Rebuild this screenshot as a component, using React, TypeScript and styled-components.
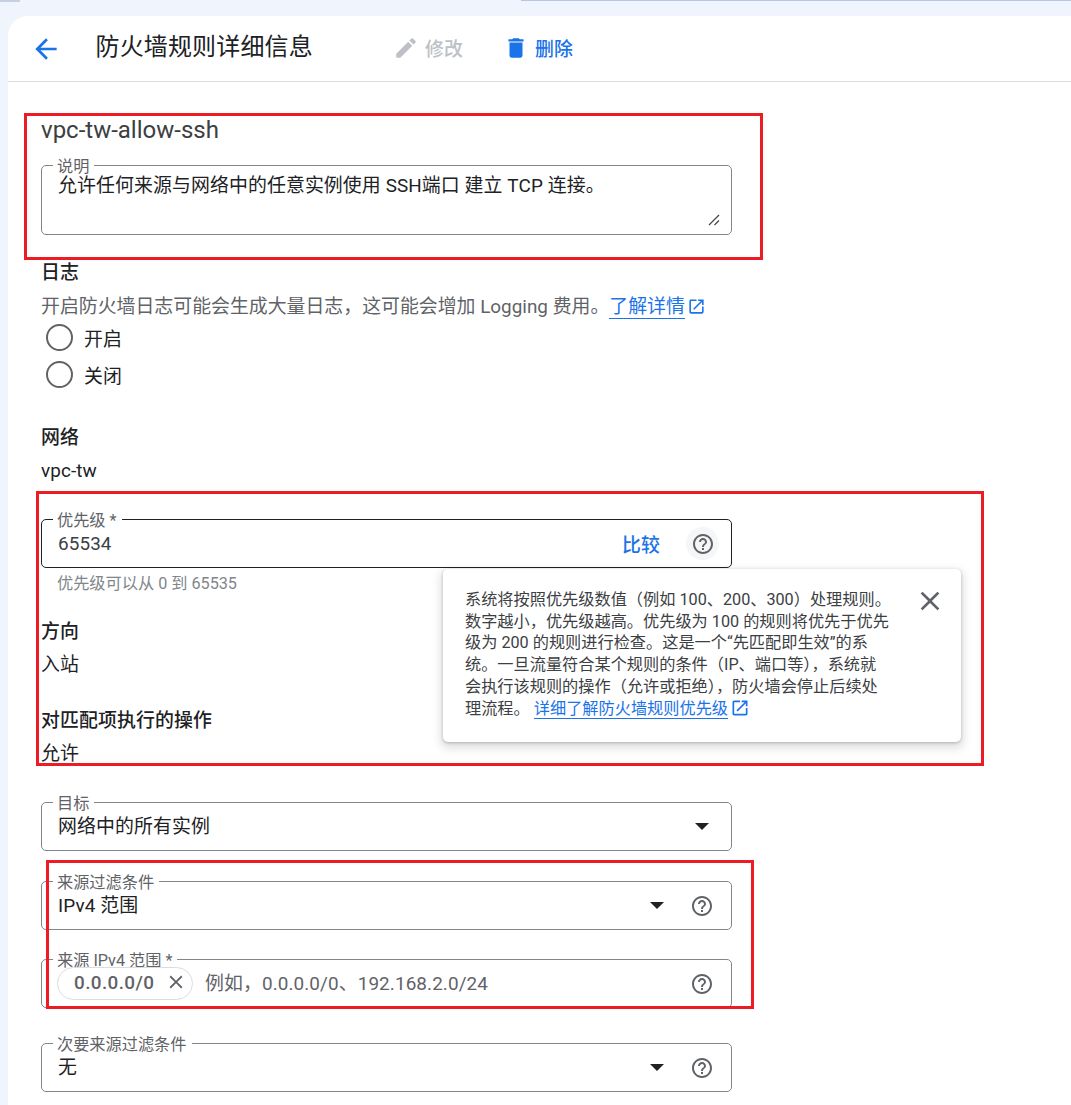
import { ReactNode } from 'react';
import { createGlobalStyle, styled } from 'styled-components';

const CJK = `Roboto, "Noto Sans CJK SC", sans-serif`;

const Global = createGlobalStyle`
  html, body {
    margin: 0;
    height: 1105px;
    overflow: hidden;
    background: #f0f4fc;
  }
  * { box-sizing: border-box; }
`;

const HelpIcon = () => (
  <svg width="24" height="24" viewBox="0 0 24 24" fill="#5f6368">
    <path d="M11 18h2v-2h-2v2zm1-16C6.48 2 2 6.48 2 12s4.48 10 10 10 10-4.480 10-10S17.520 2 12 2zm0 18c-4.410 0-8-3.590-8-8s3.590-8 8-8 8 3.590 8 8-3.590 8-8 8zm0-14c-2.210 0-4 1.790-4 4h2c0-1.100.9-2 2-2s2 .9 2 2c0 2-3 1.750-3 5h2c0-2.250 3-2.500 3-5 0-2.210-1.790-4-4-4z" />
  </svg>
);

const ExternalIcon = ({ size = 19 }: { size?: number }) => (
  <svg width={size} height={size} viewBox="0 0 24 24" fill="#1a73e8">
    <path d="M19 19H5V5h7V3H5c-1.110 0-2 .9-2 2v14c0 1.100.89 2 2 2h14c1.100 0 2-.9 2-2v-7h-2v7zM14 3v2h3.590l-9.830 9.830 1.410 1.410L19 6.410V10h2V3h-7z" />
  </svg>
);

const Field = ({
  label,
  dark,
  height,
  children,
}: {
  label: string;
  dark?: boolean;
  height?: number;
  children: ReactNode;
}) => (
  <FieldBox $dark={dark} $height={height}>
    <FieldLabel>{label}</FieldLabel>
    {children}
  </FieldBox>
);

export default function App() {
  return (
    <Page>
      <Global />
      <TopEdgeLeft />
      <TopEdgeRight />
      <Card>
        <Header>
          <BackButton aria-label="back">
            <svg width="32" height="32" viewBox="0 0 24 24" fill="#1a73e8">
              <path d="M20 11H7.830l5.590-5.590L12 4l-8 8 8 8 1.410-1.410L7.830 13H20v-2z" />
            </svg>
          </BackButton>
          <PageTitle>防火墙规则详细信息</PageTitle>
          <Action $disabled>
            <svg width="26" height="26" viewBox="0 0 24 24" fill="#bdc1c6">
              <path d="M3 17.250V21h3.750L17.810 9.940l-3.750-3.750L3 17.250zM20.710 7.040a1 1 0 0 0 0-1.410l-2.340-2.340a1 1 0 0 0-1.410 0l-1.830 1.830 3.750 3.750 1.830-1.830z" />
            </svg>
            修改
          </Action>
          <Action>
            <svg width="26" height="26" viewBox="0 0 24 24" fill="#1a73e8">
              <path d="M6 19c0 1.100.9 2 2 2h8c1.100 0 2-.9 2-2V7H6v12zM19 4h-3.500l-1-1h-5l-1 1H5v2h14V4z" />
            </svg>
            删除
          </Action>
        </Header>

        <Form>
          <RuleName>vpc-tw-allow-ssh</RuleName>
          <Field label="说明" height={70}>
            <FieldValue $top>允许任何来源与网络中的任意实例使用 SSH端口 建立 TCP 连接。</FieldValue>
            <ResizeGrip viewBox="0 0 12 12" width="12" height="12">
              <path d="M1 11 11 1M6.500 11 11 6.500" stroke="#444" strokeWidth="1.200" fill="none" />
            </ResizeGrip>
          </Field>

          <Heading $gap={25}>日志</Heading>
          <Description>
            开启防火墙日志可能会生成大量日志，这可能会增加 Logging 费用。
            <DocLink>了解详情</DocLink>
            <IconSlot>
              <ExternalIcon />
            </IconSlot>
          </Description>
          <RadioRow>
            <Radio />
            开启
          </RadioRow>
          <RadioRow>
            <Radio />
            关闭
          </RadioRow>

          <Heading $gap={32}>网络</Heading>
          <Value>vpc-tw</Value>

          <FieldGap $gap={35} />
          <Field label="优先级 *" dark>
            <FieldValue $muted>65534</FieldValue>
            <TextAction>比较</TextAction>
            <HelpHalo>
              <HelpIcon />
            </HelpHalo>
          </Field>
          <Hint>优先级可以从 0 到 65535</Hint>

          <Heading $gap={25}>方向</Heading>
          <Value>入站</Value>
          <Heading $gap={30}>对匹配项执行的操作</Heading>
          <Value>允许</Value>

          <FieldGap $gap={35} />
          <Field label="目标">
            <FieldValue>网络中的所有实例</FieldValue>
            <Caret $end />
          </Field>

          <FieldGap $gap={30} />
          <Field label="来源过滤条件">
            <FieldValue>IPv4 范围</FieldValue>
            <Caret />
            <HelpSlot>
              <HelpIcon />
            </HelpSlot>
          </Field>

          <FieldGap $gap={29} />
          <Field label="来源 IPv4 范围 *">
            <Chip>
              0.0.0.0/0
              <svg width="22" height="22" viewBox="0 0 24 24" fill="#5f6368">
                <path d="M19 6.410 17.590 5 12 10.590 6.410 5 5 6.410 10.590 12 5 17.590 6.410 19 12 13.410 17.590 19 19 17.590 13.410 12z" />
              </svg>
            </Chip>
            <Placeholder>例如，0.0.0.0/0、192.168.2.0/24</Placeholder>
            <HelpSlot>
              <HelpIcon />
            </HelpSlot>
          </Field>

          <FieldGap $gap={35} />
          <Field label="次要来源过滤条件">
            <FieldValue>无</FieldValue>
            <Caret />
            <HelpSlot>
              <HelpIcon />
            </HelpSlot>
          </Field>
        </Form>
      </Card>

      <Popover>
        <PopoverText>
          系统将按照优先级数值（例如 100、200、300）处理规则。数字越小，优先级越高。优先级为 100 的规则将优先于优先级为 200 的规则进行检查。这是一个“先匹配即生效”的系统。一旦流量符合某个规则的条件（IP、端口等），系统就会执行该规则的操作（允许或拒绝），防火墙会停止后续处理流程。{' '}
          <DocLink>详细了解防火墙规则优先级</DocLink>
          <IconSlot>
            <ExternalIcon size={20} />
          </IconSlot>
        </PopoverText>
        <CloseButton aria-label="close">
          <svg width="32" height="32" viewBox="0 0 24 24" fill="#5f6368">
            <path d="M19 6.410 17.590 5 12 10.590 6.410 5 5 6.410 10.590 12 5 17.590 6.410 19 12 13.410 17.590 19 19 17.590 13.410 12z" />
          </svg>
        </CloseButton>
      </Popover>

      <Annotation $x={24} $y={113} $w={739} $h={147} />
      <Annotation $x={36} $y={491} $w={948} $h={275} />
      <Annotation $x={46} $y={860} $w={708} $h={149} />
    </Page>
  );
}

const Page = styled.div`
  position: relative;
  height: 1105px;
  padding: 16px 0 0 8px;
  overflow: hidden;
  background: #f0f4fc;
  font-family: ${CJK};
  color: #202124;
`;

const TopEdgeLeft = styled.div`
  position: absolute;
  left: 0;
  top: 0;
  width: 20px;
  height: 2px;
  background: #c6cfe4;
`;

const TopEdgeRight = styled.div`
  position: absolute;
  left: 521px;
  right: 0;
  top: 0;
  height: 1px;
  background: #b8c4e0;
`;

const Card = styled.div`
  height: 1200px;
  background: #fff;
  border-top-left-radius: 20px;
`;

const Header = styled.div`
  display: flex;
  align-items: center;
  height: 66px;
  padding-left: 22px;
  border-bottom: 1px solid #dadce0;
`;

const BackButton = styled.div`
  display: flex;
  width: 32px;
  height: 32px;
`;

const PageTitle = styled.h1`
  margin: 0 0 3px 33.500px;
  width: 297.500px;
  font-size: 24px;
  font-weight: 400;
  letter-spacing: 0.15px;
  line-height: 32px;
`;

const Action = styled.div<{ $disabled?: boolean }>`
  display: flex;
  align-items: center;
  gap: 6px;
  margin: 0 40px 2px 0;
  font-size: 18.9px;
  font-weight: 500;
  letter-spacing: 0.1px;
  color: ${(p) => (p.$disabled ? '#bdc1c6' : '#1a73e8')};
`;

const Form = styled.div`
  width: 724px;
  padding: 32px 0 0 33px;
`;

const RuleName = styled.div`
  margin-bottom: 19px;
  font-size: 24px;
  line-height: 32px;
  color: #3c4043;
`;

const FieldBox = styled.div<{ $dark?: boolean; $height?: number }>`
  position: relative;
  display: flex;
  align-items: center;
  height: ${(p) => p.$height ?? 49}px;
  padding: 0 17px 0 16px;
  border: 1px solid ${(p) => (p.$dark ? '#202124' : '#80868b')};
  border-radius: 5px;
`;

const FieldLabel = styled.span`
  position: absolute;
  left: 11px;
  top: -8px;
  padding: 1px 5px 0 4px;
  background: #fff;
  color: #5f6368;
  font-size: 16.2px;
  line-height: 15px;
`;

const FieldValue = styled.div<{ $top?: boolean; $muted?: boolean }>`
  position: relative;
  flex: 1;
  align-self: ${(p) => (p.$top ? 'flex-start' : 'center')};
  margin-top: ${(p) => (p.$top ? '7px' : '0')};
  font-size: 18.9px;
  letter-spacing: 0.1px;
  line-height: 26px;
  color: ${(p) => (p.$muted ? '#3c4043' : '#202124')};
`;

const ResizeGrip = styled.svg`
  position: absolute;
  right: 11px;
  bottom: 8px;
`;

const FieldGap = styled.div<{ $gap: number }>`
  height: ${(p) => p.$gap}px;
`;

const Heading = styled.div<{ $gap: number }>`
  margin-top: ${(p) => p.$gap}px;
  font-size: 18.9px;
  font-weight: 500;
  letter-spacing: 0.1px;
  line-height: 26px;
`;

const DocLink = styled.span`
  color: #1a73e8;
  border-bottom: 1px solid #1a73e8;
`;

const Description = styled.div`
  display: flex;
  align-items: center;
  height: 25px;
  margin-top: 8px;
  font-size: 18.9px;
  line-height: 26px;
  color: #5f6368;
  white-space: pre;

  ${DocLink} {
    line-height: 23px;
  }
`;

const IconSlot = styled.span`
  display: inline-flex;
  vertical-align: -4px;
  margin-left: 2px;
`;

const RadioRow = styled.label`
  display: flex;
  align-items: center;
  gap: 11px;
  height: 37px;
  padding-left: 5px;
  font-size: 18.9px;
  letter-spacing: 0.1px;
`;

const Radio = styled.span`
  width: 27px;
  height: 27px;
  border: 2px solid #5f6368;
  border-radius: 50%;
`;

const Value = styled.div`
  margin-top: 7px;
  font-size: 18.9px;
  letter-spacing: 0.1px;
  line-height: 26px;
`;

const TextAction = styled.span`
  margin-right: 26px;
  font-size: 18.9px;
  letter-spacing: 0.1px;
  font-weight: 500;
  color: #1a73e8;
`;

const HelpHalo = styled.span`
  display: flex;
  align-items: center;
  justify-content: center;
  width: 33px;
  height: 33px;
  margin-right: -5px;
  border-radius: 50%;
  background: #f5f6f7;
`;

const HelpSlot = styled.span`
  display: flex;
  margin-left: 26px;
`;

const Caret = styled.span<{ $end?: boolean }>`
  width: 0;
  height: 0;
  margin-right: ${(p) => (p.$end ? '5px' : '0')};
  border-left: 7px solid transparent;
  border-right: 7px solid transparent;
  border-top: 7px solid #202124;
`;

const Hint = styled.div`
  margin-top: 6px;
  padding-left: 16px;
  font-size: 16.2px;
  line-height: 20px;
  color: #80868b;
`;

const Chip = styled.span`
  position: relative;
  display: flex;
  align-items: center;
  justify-content: space-between;
  flex: none;
  width: 136px;
  height: 33px;
  margin-left: -1px;
  padding: 0 5px 3px 16px;
  background: #fff;
  border: 1px solid #dadce0;
  border-radius: 17px;
  font-size: 18.9px;
  font-weight: 500;
  letter-spacing: 0.4px;
  color: #5f6368;
`;

const Placeholder = styled.span`
  flex: 1;
  margin: 0 0 4px 12px;
  font-size: 18.9px;
  letter-spacing: 0.1px;
  color: #5f6368;
`;

const Popover = styled.div`
  position: absolute;
  left: 443px;
  top: 569px;
  display: flex;
  width: 518px;
  height: 173px;
  padding: 20px 16px 0 22px;
  background: #fff;
  border-radius: 5px;
  box-shadow: 0 1px 3px rgba(60, 64, 67, 0.3), 0 4px 8px 3px rgba(60, 64, 67, 0.15);
`;

const PopoverText = styled.div`
  flex: none;
  width: 426px;
  font-size: 16.2px;
  line-height: 21.7px;
  color: #3c4043;
`;

const CloseButton = styled.div`
  display: flex;
  margin: -4px 0 0 23px;
`;

const Annotation = styled.div<{ $x: number; $y: number; $w: number; $h: number }>`
  position: absolute;
  left: ${(p) => p.$x}px;
  top: ${(p) => p.$y}px;
  width: ${(p) => p.$w}px;
  height: ${(p) => p.$h}px;
  border: 3px solid #ed1c24;
  pointer-events: none;
`;
